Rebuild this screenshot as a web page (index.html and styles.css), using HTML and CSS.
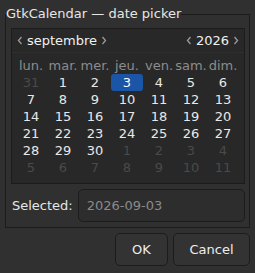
FILE: index.html
```html
<!DOCTYPE html>
<html lang="fr">
<head>
    <meta charset="UTF-8">
    <title>GtkCalendar — date picker</title>
    <link rel="stylesheet" href="styles.css">
</head>
<body>
    <fieldset class="frame">
        <legend class="frame-title">GtkCalendar — date picker</legend>

        <div class="calendar">
            <div class="cal-header">
                <div class="cal-nav">
                    <svg class="chev" width="6" height="9" viewBox="0 0 6 9"><path d="M4.5 1 L1.5 4.5 L4.5 8" fill="none" stroke="#9a9a9a" stroke-width="1.3"/></svg>
                    <span class="month">septembre</span>
                    <svg class="chev" width="6" height="9" viewBox="0 0 6 9"><path d="M1.5 1 L4.5 4.5 L1.5 8" fill="none" stroke="#9a9a9a" stroke-width="1.3"/></svg>
                </div>
                <div class="cal-nav">
                    <svg class="chev" width="6" height="9" viewBox="0 0 6 9"><path d="M4.5 1 L1.5 4.5 L4.5 8" fill="none" stroke="#9a9a9a" stroke-width="1.3"/></svg>
                    <span class="year">2026</span>
                    <svg class="chev" width="6" height="9" viewBox="0 0 6 9"><path d="M1.5 1 L4.5 4.5 L1.5 8" fill="none" stroke="#9a9a9a" stroke-width="1.3"/></svg>
                </div>
            </div>

            <div class="cal-grid">
                <span class="dayname">lun.</span>
                <span class="dayname">mar.</span>
                <span class="dayname">mer.</span>
                <span class="dayname">jeu.</span>
                <span class="dayname">ven.</span>
                <span class="dayname">sam.</span>
                <span class="dayname">dim.</span>

                <span class="day other">31</span>
                <span class="day">1</span>
                <span class="day">2</span>
                <span class="day selected">3</span>
                <span class="day">4</span>
                <span class="day">5</span>
                <span class="day">6</span>

                <span class="day">7</span>
                <span class="day">8</span>
                <span class="day">9</span>
                <span class="day">10</span>
                <span class="day">11</span>
                <span class="day">12</span>
                <span class="day">13</span>

                <span class="day">14</span>
                <span class="day">15</span>
                <span class="day">16</span>
                <span class="day">17</span>
                <span class="day">18</span>
                <span class="day">19</span>
                <span class="day">20</span>

                <span class="day">21</span>
                <span class="day">22</span>
                <span class="day">23</span>
                <span class="day">24</span>
                <span class="day">25</span>
                <span class="day">26</span>
                <span class="day">27</span>

                <span class="day">28</span>
                <span class="day">29</span>
                <span class="day">30</span>
                <span class="day other">1</span>
                <span class="day other">2</span>
                <span class="day other">3</span>
                <span class="day other">4</span>

                <span class="day other">5</span>
                <span class="day other">6</span>
                <span class="day other">7</span>
                <span class="day other">8</span>
                <span class="day other">9</span>
                <span class="day other">10</span>
                <span class="day other">11</span>
            </div>
        </div>

        <div class="selected-row">
            <label class="selected-label" for="sel">Selected:</label>
            <input class="selected-entry" id="sel" type="text" placeholder="2026-09-03">
        </div>
    </fieldset>

    <div class="actions">
        <button class="btn ok">OK</button>
        <button class="btn cancel">Cancel</button>
    </div>
</body>
</html>
```

FILE: styles.css
```css
/* Window */
body {
    margin: 0;
    background-color: #303030;
    color: #eeeeee;
    font-family: "DejaVu Sans", sans-serif;
    font-size: 13px;
}

/* Frame with its label */
.frame {
    margin: 5px 5px 0 5px;
    padding: 5px 4px 5px 5px;
    border: 1px solid #1c1c1c;
    min-width: 0;
}

.frame-title {
    padding: 0;
    margin-left: -5px;
    line-height: 18px;
    color: #e6e6e6;
}

/* Calendar */
.calendar {
    background-color: #282828;
    border: 1px solid #1c1c1c;
    height: 154px;
}

.cal-header {
    display: flex;
    justify-content: space-between;
    align-items: center;
    height: 23px;
    padding: 0 5px 0 5px;
    border-bottom: 1px solid #2f2f2f;
}

.cal-nav {
    display: flex;
    align-items: center;
    gap: 4px;
}

.chev {
    display: block;
}

.month,
.year {
    color: #f0f0f0;
}

.cal-grid {
    display: grid;
    grid-template-columns: repeat(7, 32px);
    grid-auto-rows: 17px;
    margin: 4px 0 0 3px;
}

.dayname,
.day {
    text-align: center;
    line-height: 17px;
}

.dayname {
    color: #8c8c8c;
}

.day {
    color: #e8e8e8;
}

.day.other {
    color: #4a4a4a;
}

.day.selected {
    background-color: #1b55a6;
    border-radius: 3px;
    color: #ffffff;
}

/* Selected date row */
.selected-row {
    display: flex;
    align-items: center;
    margin-top: 5px;
    gap: 5px;
}

.selected-label {
    color: #e6e6e6;
    padding-left: 1px;
}

.selected-entry {
    flex-grow: 1;
    min-width: 0;
    height: 33px;
    box-sizing: border-box;
    padding: 0 8px;
    background-color: #2d2d2d;
    border: 1px solid #1c1c1c;
    border-radius: 5px;
    font-family: "DejaVu Sans", sans-serif;
    font-size: 13px;
    color: #eeeeee;
    outline: none;
}

.selected-entry::placeholder {
    color: #8a8a8a;
}

/* Dialog buttons */
.actions {
    display: flex;
    justify-content: flex-end;
    gap: 5px;
    margin: 5px 5px 0 0;
}

.btn {
    height: 33px;
    background-color: #333333;
    border: 1px solid #1c1c1c;
    border-radius: 5px;
    color: #eeeeee;
    font-family: "DejaVu Sans", sans-serif;
    font-size: 13px;
}

.btn.ok {
    width: 53px;
}

.btn.cancel {
    width: 77px;
}
```
